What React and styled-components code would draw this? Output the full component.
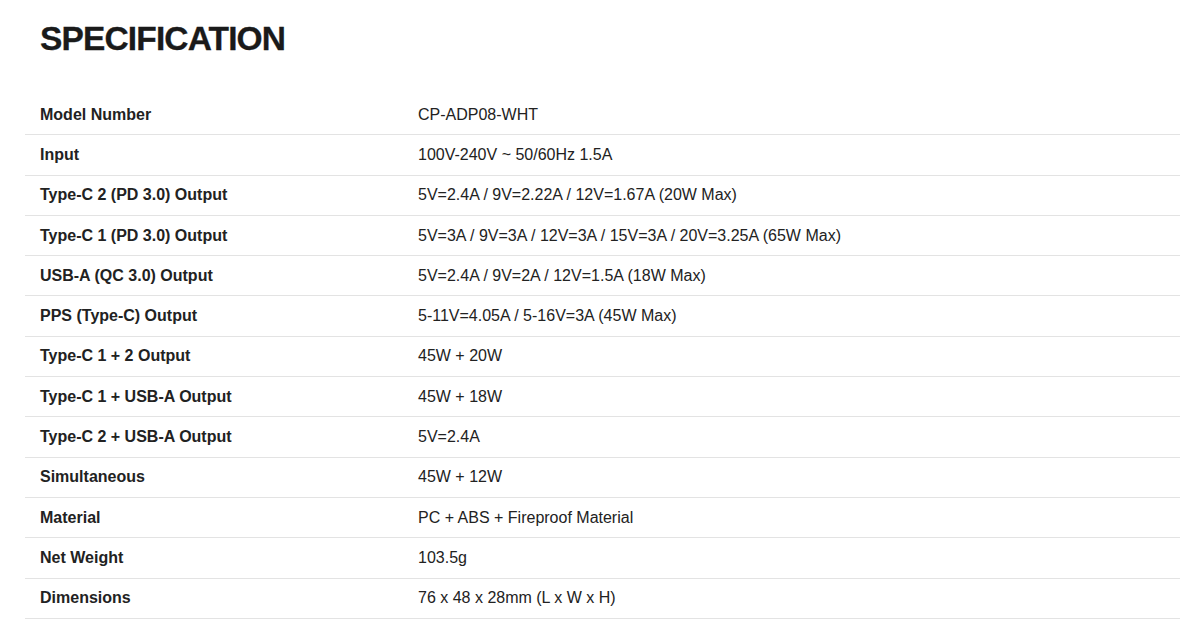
import React from "react";
import styled, { createGlobalStyle } from "styled-components";

const Global = createGlobalStyle`
  html, body { margin: 0; padding: 0; background: #fff; }
  body { font-family: "Liberation Sans", Arial, Helvetica, sans-serif; color: #222; }
`;

const Page = styled.div`
  padding: 20px 15px 0 25px;
`;

const Title = styled.h2`
  margin: 0 0 0 15px;
  font-family: "Liberation Sans", Arial, sans-serif;
  font-weight: 700;
  font-size: 33.5px;
  letter-spacing: -0.85px;
  line-height: 38px;
  color: #1a1a1a;
  -webkit-text-stroke: 0.3px #1a1a1a;
`;

const Table = styled.div`
  margin-top: 37px;
  display: flex;
  flex-direction: column;
`;

const Row = styled.div`
  display: grid;
  grid-template-columns: 378px 1fr;
  height: 40.3px;
  align-items: center;
  border-bottom: 1.5px solid #e3e3e3;
  box-sizing: border-box;
  padding-left: 15px;
  font-size: 16px;
`;

const Label = styled.div`
  font-weight: 700;
  color: #222;
`;

const Value = styled.div`
  font-weight: 400;
  color: #222;
`;

const specs = [
  ["Model Number", "CP-ADP08-WHT"],
  ["Input", "100V-240V ~ 50/60Hz 1.5A"],
  ["Type-C 2 (PD 3.0) Output", "5V=2.4A / 9V=2.22A / 12V=1.67A (20W Max)"],
  ["Type-C 1 (PD 3.0) Output", "5V=3A / 9V=3A / 12V=3A / 15V=3A / 20V=3.25A (65W Max)"],
  ["USB-A (QC 3.0) Output", "5V=2.4A / 9V=2A / 12V=1.5A (18W Max)"],
  ["PPS (Type-C) Output", "5-11V=4.05A / 5-16V=3A (45W Max)"],
  ["Type-C 1 + 2 Output", "45W + 20W"],
  ["Type-C 1 + USB-A Output", "45W + 18W"],
  ["Type-C 2 + USB-A Output", "5V=2.4A"],
  ["Simultaneous", "45W + 12W"],
  ["Material", "PC + ABS + Fireproof Material"],
  ["Net Weight", "103.5g"],
  ["Dimensions", "76 x 48 x 28mm (L x W x H)"],
];

export default function App() {
  return (
    <Page>
      <Global />
      <Title>SPECIFICATION</Title>
      <Table>
        {specs.map(([k, v]) => (
          <Row key={k}>
            <Label>{k}</Label>
            <Value>{v}</Value>
          </Row>
        ))}
      </Table>
    </Page>
  );
}
